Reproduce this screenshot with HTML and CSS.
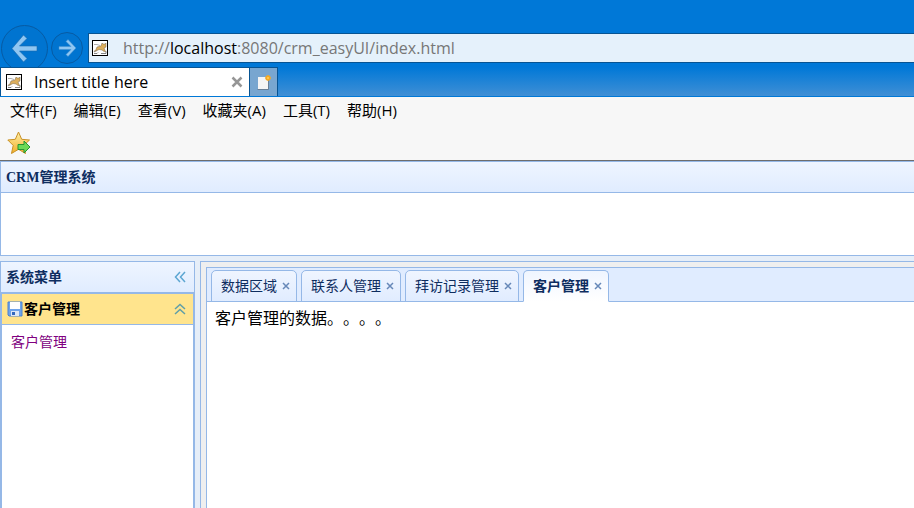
FILE: index.html
```
<!DOCTYPE html>
<html lang="zh-CN">
<head>
  <meta charset="UTF-8" />
  <meta name="viewport" content="width=device-width, initial-scale=1" />
  <title>Insert title here</title>
  <link rel="stylesheet" href="styles.css">
</head>
<body>
  <svg class="defs" width="0" height="0" aria-hidden="true">
    <symbol id="cat" viewBox="0 0 16 16">
      <rect width="16" height="16" fill="#000"/>
      <path d="M1 1h14v14H1z" fill="#fff"/>
      <path d="M2 4.500h3l3 1M2 12l3-1.500" fill="none" stroke="#999" stroke-width=".8"/>
      <path d="M10 3l1 1h2l1-1v4l-2 1 1 2.500 1 1h-2l-2-1.500-3-.5-2 1-3 1 2-2 1-2.500 4-1z" fill="#dcae5c" stroke="#76654a" stroke-width=".5"/>
      <path d="M2 13.500h3l1-1M9 13.500h5v-2" fill="none" stroke="#666" stroke-width=".8"/>
    </symbol>
    <symbol id="x" viewBox="0 0 8 8">
      <path d="M1 1l6 6M7 1L1 7" stroke="#6688b8" stroke-width="1.500"/>
    </symbol>
  </svg>

  <!-- Browser window -->
  <header class="browser">
    <div class="address-row">
      <button class="nav back" aria-label="后退">
        <svg width="48" height="48" viewBox="0 0 48 48">
          <circle cx="23.500" cy="23.500" r="23" fill="#0074d0" stroke="#075ba3"/>
          <path d="M36 21v5H18.500l7.500 7.500-3.500 3.500-11.500-13.500L22.500 10l3.500 3.500-7.500 7.500z" fill="#8fc6f2" stroke="#1768ad" stroke-width=".6"/>
        </svg>
      </button>
      <button class="nav forward" aria-label="前进">
        <svg width="32" height="32" viewBox="0 0 32 32">
          <circle cx="16" cy="16" r="15.500" fill="#0074d0" stroke="#075ba3"/>
          <path d="M8 14.500v3h12l-5 5 2 2 8-8.500-8-8.500-2 2 5 5z" fill="#8fc6f2" stroke="#3f8fcf" stroke-width=".5"/>
        </svg>
      </button>
      <div class="address">
        <svg class="favicon"><use href="#cat"/></svg>
        <span>http://<b>localhost</b>:8080/crm_easyUI/index.html</span>
      </div>
    </div>
    <div class="tab-row">
      <div class="page-tab">
        <svg class="favicon"><use href="#cat"/></svg>
        <span>Insert title here</span>
        <button class="close" aria-label="关闭">
          <svg width="12" height="12" viewBox="0 0 12 12"><path d="M1.500 1.500l9 9M10.500 1.500l-9 9" stroke="#969696" stroke-width="2.500"/></svg>
        </button>
      </div>
      <button class="new-tab" aria-label="新建选项卡">
        <svg width="16" height="16" viewBox="0 0 16 16">
          <path d="M2 3h10v12H2z" fill="#f5f5f5"/>
          <path d="M1.500 15.500h11V6" fill="none" stroke="#687f96"/>
          <path d="M12 1v6M9 4h6M10 2l4 4M14 2l-4 4" stroke="#f6a821" stroke-width="1.500"/>
          <circle cx="12" cy="4" r="1" fill="#ffd35a"/>
        </svg>
      </button>
    </div>
  </header>

  <div class="tools">
    <nav class="menu">
      <button>文件(F)</button>
      <button>编辑(E)</button>
      <button>查看(V)</button>
      <button>收藏夹(A)</button>
      <button>工具(T)</button>
      <button>帮助(H)</button>
    </nav>
    <button class="favorite" aria-label="添加到收藏夹栏">
      <svg width="24" height="24" viewBox="0 0 24 24">
        <defs>
          <linearGradient id="gold" x2="0" y2="1"><stop stop-color="#fff0a8"/><stop offset="1" stop-color="#f0ae28"/></linearGradient>
        </defs>
        <path d="M11.500 1l3.200 7.300 7.800.7-5.800 5.400 1.800 8.100-7-4.200-7 4.200 1.700-8.100L.8 9l7.500-.7z" fill="url(#gold)" stroke="#c99125" stroke-linejoin="round"/>
        <path d="M11 13.500h6V10l6 6-6 6v-3.500h-6z" fill="#6bd957" stroke="#269533"/>
      </svg>
    </button>
  </div>

  <!-- CRM page -->
  <div class="layout">
    <section class="north">
      <h1 class="panel-title">CRM管理系统</h1>
    </section>

    <div class="main">
      <aside class="west">
        <div class="panel-title">
          <h2>系统菜单</h2>
          <button class="arrow" aria-label="折叠">
            <svg width="12" height="12" viewBox="0 0 12 12"><path d="M6 1L1.500 6 6 11M11 1L6.500 6l4.500 5" fill="none" stroke="#5ca6d2" stroke-width="1.500"/></svg>
          </button>
        </div>
        <div class="accordion">
          <div class="accordion-title">
            <svg width="16" height="16" viewBox="0 0 16 16">
              <path d="M1 1h14v14H2l-1-1z" fill="#6ea3ea" stroke="#4a80cf"/>
              <path d="M3 1h10v7H3z" fill="#fff"/>
              <path d="M4 10h8v5H4z" fill="#dce7f5"/>
              <path d="M5 11h3v3H5z" fill="#3268bd"/>
            </svg>
            <h3>客户管理</h3>
            <button class="arrow" aria-label="收起">
              <svg width="12" height="12" viewBox="0 0 12 12"><path d="M1 6l5-4.500L11 6M1 11l5-4.500 5 4.500" fill="none" stroke="#5f9fa8" stroke-width="1.500"/></svg>
            </button>
          </div>
          <a href="#">客户管理</a>
        </div>
      </aside>

      <main class="center">
        <div class="tabs">
          <div class="tabs-header">
            <div class="tab">
              <button>数据区域</button>
              <button class="tab-close" aria-label="关闭"><svg><use href="#x"/></svg></button>
            </div>
            <div class="tab">
              <button>联系人管理</button>
              <button class="tab-close" aria-label="关闭"><svg><use href="#x"/></svg></button>
            </div>
            <div class="tab">
              <button>拜访记录管理</button>
              <button class="tab-close" aria-label="关闭"><svg><use href="#x"/></svg></button>
            </div>
            <div class="tab selected">
              <button>客户管理</button>
              <button class="tab-close" aria-label="关闭"><svg><use href="#x"/></svg></button>
            </div>
          </div>
          <div class="tab-body">客户管理的数据。。。。</div>
        </div>
      </main>
    </div>
  </div>
</body>
</html>
```
FILE: styles.css
```
* {
  box-sizing: border-box;
}
body {
  margin: 0;
  height: 100vh;
  display: flex;
  flex-direction: column;
  overflow: hidden;
  font-family: "Liberation Serif", "Noto Sans CJK SC", serif;
  text-spacing-trim: space-all;
}
h1,
h2,
h3 {
  margin: 0;
  font-size: 14px;
}
button {
  padding: 0;
  border: 0;
  background: none;
  color: inherit;
  font: inherit;
}
svg {
  display: block;
  flex: none;
}
.defs {
  position: absolute;
}

/* browser window */
.browser {
  flex: none;
  padding-top: 25px;
  background: #0078d7;
  font-family: "Open Sans", "Noto Sans CJK SC", sans-serif;
  font-size: 15px;
}
.address-row {
  display: flex;
  align-items: center;
  gap: 2px;
  height: 42px;
  padding-left: 1px;
}
.nav.back {
  height: 42px;
}
.nav.forward {
  padding-top: 4px;
}
.address {
  flex: 1;
  display: flex;
  align-items: center;
  gap: 15px;
  height: 30px;
  margin: 4px 0 0 3px;
  padding-left: 3px;
  background: #e5f1fb;
  border: 1px solid #075493;
  border-right: 0;
  color: #777;
  font-size: 16px;
}
.address b {
  color: #000;
  font-weight: normal;
}
.favicon {
  width: 16px;
  height: 16px;
}
.tab-row {
  position: relative;
  display: flex;
  height: 30px;
  background: linear-gradient(#0078d7, #408fd5);
  border-bottom: 1px solid #0078d7;
}
.page-tab {
  display: flex;
  align-items: center;
  gap: 12px;
  width: 250px;
  padding: 0 6px 0 5px;
  background: #fff;
  border: 1px solid #075493;
  border-bottom: 0;
  font-size: 16px;
}
.close {
  margin-left: auto;
}
.new-tab {
  display: flex;
  align-items: center;
  justify-content: center;
  width: 28px;
  background: #78a6d0;
  border: 1px solid #075493;
  border-width: 1px 1px 0 0;
}
.tools {
  flex: none;
  height: 64px;
  background: #f7f7f7;
  border-bottom: 1px solid #6d6d6d;
  font-family: "Open Sans", "Noto Sans CJK SC", sans-serif;
  font-size: 15px;
}
.menu {
  display: flex;
  gap: 17px;
  height: 25px;
  padding-left: 10px;
}
.favorite {
  margin: 9px 0 0 7px;
}

/* page layout */
.layout {
  flex: 1;
  min-height: 0;
  display: flex;
  flex-direction: column;
  gap: 5px;
  background: #e6eef8;
}
.north {
  flex: none;
  height: 95px;
  background: #fff;
  border: 1px solid #95b8e7;
  border-right: 0;
}
.panel-title {
  display: flex;
  align-items: center;
  justify-content: space-between;
  height: 31px;
  padding: 0 8px 3px 5px;
  background: linear-gradient(#eff5ff, #e0ecff);
  border-bottom: 1px solid #95b8e7;
  color: #0e2d5f;
}
.panel-title .arrow {
  padding-top: 3px;
}
.main {
  flex: 1;
  min-height: 0;
  display: flex;
  gap: 5px;
}
.west {
  display: flex;
  flex-direction: column;
  width: 195px;
  background: #fff;
  border: 1px solid #95b8e7;
  border-bottom: 0;
}
.accordion {
  flex: 1;
  border: 1px solid #95b8e7;
  border-width: 1px 1px 0;
  font-size: 14px;
}
.accordion-title {
  display: flex;
  align-items: center;
  gap: 1px;
  height: 31px;
  padding: 0 7px 0 5px;
  background: #ffe48d;
  border-bottom: 1px solid #95b8e7;
}
.accordion-title h3 {
  padding-bottom: 3px;
}
.accordion-title .arrow {
  margin-left: auto;
}
.accordion a {
  display: block;
  padding: 8px 9px;
  line-height: 20px;
  color: #800080;
  text-decoration: none;
}
.center {
  flex: 1;
  display: flex;
  padding: 5px 0 0 5px;
  background: #efefef;
  border: 1px solid #95b8e7;
  border-width: 1px 0 0 1px;
}
.tabs {
  flex: 1;
  background: #fff;
  border: 1px solid #95b8e7;
  border-width: 1px 0 0 1px;
}
.tabs-header {
  display: flex;
  gap: 4px;
  height: 34px;
  padding: 2px 0 0 4px;
  background: #e0ecff;
  border-bottom: 1px solid #95b8e7;
}
.tab {
  display: flex;
  align-items: center;
  gap: 5px;
  height: 32px;
  padding: 0 6px 2px 9px;
  background: linear-gradient(#eff5ff, #e0ecff);
  border: 1px solid #95b8e7;
  border-radius: 5px 5px 0 0;
  color: #0e2d5f;
  font-size: 14px;
  white-space: nowrap;
}
.tab.selected {
  background: linear-gradient(#eff5ff, #fff);
  border-bottom-color: #fff;
  font-weight: bold;
}
.tab-close {
  padding-top: 2px;
}
.tab-close svg {
  width: 8px;
  height: 8px;
}
.tab-body {
  padding: 5px 8px;
  font-size: 16px;
  line-height: 24px;
}
```
